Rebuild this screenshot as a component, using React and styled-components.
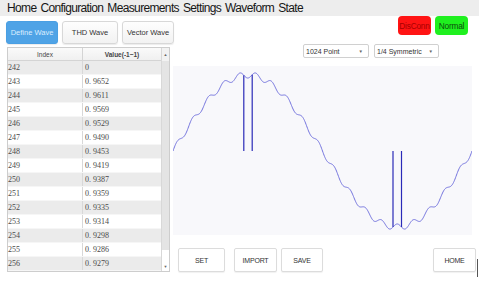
import React from "react";
import styled, { createGlobalStyle } from "styled-components";

const GlobalStyle = createGlobalStyle`
  html, body {
    margin: 0;
    padding: 0;
    background: #ffffff;
  }
  body {
    font-family: "Liberation Sans", Arial, sans-serif;
    overflow: hidden;
  }
`;

const Page = styled.div`
  width: 479px;
  height: 285px;
  overflow: hidden;
`;

const MenuBar = styled.nav`
  height: 16px;
  background: #ededed;
  display: flex;
  align-items: center;
  gap: 4px;
  padding-left: 7px;
  font-size: 12px;
  letter-spacing: -0.65px;
  color: #161616;
`;

const MenuItem = styled.span`
  line-height: 16px;
  white-space: nowrap;
`;

const Body = styled.div`
  display: grid;
  grid-template-columns: 173px 1fr;
`;

const LeftColumn = styled.div`
  display: flex;
  flex-direction: column;
`;

const Tabs = styled.div`
  display: flex;
  gap: 4px;
  margin-top: 5px;
  padding-left: 6px;
`;

const TabButton = styled.button`
  flex: none;
  width: ${(p) => p.$w}px;
  height: 23px;
  padding: 0;
  border-radius: 3px;
  box-sizing: border-box;
  font-family: "Liberation Sans", Arial, sans-serif;
  font-size: 7.5px;
  border: 1px solid ${(p) => (p.$active ? "#4a9fe3" : "#d8d8d8")};
  background: ${(p) => (p.$active ? "#4fa3e6" : "linear-gradient(#fefefe, #f2f2f2)")};
  color: ${(p) => (p.$active ? "#dbeeff" : "#333333")};
  box-shadow: 0 1px 1px rgba(0, 0, 0, 0.08);
`;

const TableBox = styled.div`
  margin: 3px 0 0 7px;
  width: 163px;
  height: 225px;
  box-sizing: border-box;
  border: 1px solid #cdcdcd;
  display: flex;
`;

const Grid = styled.div`
  flex: 1;
  display: flex;
  flex-direction: column;
`;

const HeaderRow = styled.div`
  display: grid;
  grid-template-columns: 75px 1fr;
  height: 13px;
  box-sizing: border-box;
  border-bottom: 1px solid #d4d4d4;
  background: linear-gradient(#fafafa, #f0f0f0);
  font-size: 6.5px;
  color: #444;
`;

const HeaderCell = styled.div`
  display: flex;
  align-items: center;
  justify-content: center;
  font-weight: ${(p) => (p.$bold ? 700 : 400)};
  border-right: ${(p) => (p.$divider ? "1px solid #d4d4d4" : "none")};
`;

const Row = styled.div`
  display: grid;
  grid-template-columns: 75px 1fr;
  height: 14px;
  box-sizing: border-box;
  border-bottom: 1px solid #f6f6f6;
  background: ${(p) => (p.$shaded ? "#ebebeb" : "#ffffff")};
  font-family: "Liberation Serif", "DejaVu Serif", serif;
  font-size: 8px;
  color: #4a4a4a;
`;

const Cell = styled.div`
  display: flex;
  align-items: center;
  padding-left: ${(p) => p.$pad}px;
  border-right: ${(p) => (p.$divider ? "1px solid #d8d8d8" : "none")};
`;

const ScrollBar = styled.div`
  width: 7px;
  border-left: 1px solid #d8d8d8;
  display: flex;
  flex-direction: column;
  background: #ffffff;
`;

const ScrollArrow = styled.div`
  height: ${(p) => p.$h}px;
  display: flex;
  align-items: center;
  justify-content: center;
  background: ${(p) => p.$bg};
  font-size: 4px;
  color: #666;
`;

const ScrollThumb = styled.div`
  height: 189px;
  background: #e4e4e4;
`;

const ScrollTrack = styled.div`
  flex: 1;
`;

const RightColumn = styled.div`
  display: flex;
  flex-direction: column;
`;

const StatusRow = styled.div`
  display: flex;
  justify-content: flex-end;
  gap: 4px;
  padding-right: 11px;
`;

const StatusBadge = styled.div`
  width: 33px;
  height: 19px;
  border-radius: 4px;
  display: flex;
  align-items: center;
  justify-content: center;
  overflow: hidden;
  font-size: 8.3px;
  letter-spacing: -0.2px;
  background: ${(p) => p.$bg};
  color: ${(p) => p.$fg};
`;

const SelectRow = styled.div`
  display: flex;
  gap: 5px;
  margin-top: 9px;
  padding-left: 130px;
`;

const Select = styled.div`
  width: ${(p) => p.$w}px;
  height: 14px;
  box-sizing: border-box;
  border: 1px solid #d0d0d0;
  border-radius: 2px;
  background: #ffffff;
  display: flex;
  align-items: center;
  justify-content: space-between;
  padding: 0 5px 0 2px;
  font-size: 7px;
  color: #333;
`;

const Caret = styled.span`
  font-size: 4.5px;
  color: #666;
`;

const PlotArea = styled.svg`
  display: block;
  margin-top: 8px;
  background: #f8f8fb;
`;

const ActionRow = styled.div`
  display: flex;
  align-items: flex-start;
  margin-top: 13px;
  padding-left: 5px;
`;

const ActionButton = styled.button`
  flex: none;
  width: ${(p) => p.$w}px;
  height: 24px;
  margin-right: ${(p) => p.$gap || 0}px;
  margin-left: ${(p) => (p.$push ? "auto" : "0")};
  padding: 0;
  box-sizing: border-box;
  border: 1px solid #dcdcdc;
  border-radius: 2px;
  background: #ffffff;
  box-shadow: 0 1px 1px rgba(0, 0, 0, 0.06);
  font-family: "Liberation Sans", Arial, sans-serif;
  font-size: 7px;
  letter-spacing: -0.2px;
  color: #333;
`;

const EdgeMark = styled.div`
  width: 1px;
  height: 18px;
  margin: 11px 1px 0 1px;
  background: #555;
`;

const PLOT_W = 299;
const PLOT_H = 169;
const MID = 85;
const AMP = 76;

const waveY = (x) => {
  const t = (x / PLOT_W) * 2 * Math.PI;
  return MID - AMP * (Math.sin(t) + 0.04 * Math.sin(19 * t));
};

const buildWave = () => {
  let d = "";
  for (let x = 0; x <= PLOT_W; x += 0.5) {
    d += (x === 0 ? "M" : "L") + x.toFixed(1) + " " + waveY(x).toFixed(2) + " ";
  }
  return d;
};

const spikes = [70.8, 79.2, 220, 228.5];

const rows = [
  ["242", "0"],
  ["243", "0. 9652"],
  ["244", "0. 9611"],
  ["245", "0. 9569"],
  ["246", "0. 9529"],
  ["247", "0. 9490"],
  ["248", "0. 9453"],
  ["249", "0. 9419"],
  ["250", "0. 9387"],
  ["251", "0. 9359"],
  ["252", "0. 9335"],
  ["253", "0. 9314"],
  ["254", "0. 9298"],
  ["255", "0. 9286"],
  ["256", "0. 9279"],
];

const menu = ["Home", "Configuration", "Measurements", "Settings", "Waveform", "State"];

const WavePlot = () => (
  <PlotArea width={PLOT_W} height={PLOT_H} viewBox={`0 0 ${PLOT_W} ${PLOT_H}`}>
    <path d={buildWave()} fill="none" stroke="#7474de" strokeWidth="1" />
    {spikes.map((x) => (
      <line key={x} x1={x} x2={x} y1={waveY(x)} y2={MID} stroke="#2a2ab8" strokeWidth="1.2" />
    ))}
  </PlotArea>
);

const App = () => {
  return (
    <Page>
      <GlobalStyle />
      <MenuBar>
        {menu.map((m) => (
          <MenuItem key={m}>{m}</MenuItem>
        ))}
      </MenuBar>
      <Body>
        <LeftColumn>
          <Tabs>
            <TabButton $w={52} $active>Define Wave</TabButton>
            <TabButton $w={56}>THD Wave</TabButton>
            <TabButton $w={52}>Vector Wave</TabButton>
          </Tabs>
          <TableBox>
            <Grid>
              <HeaderRow>
                <HeaderCell $divider>Index</HeaderCell>
                <HeaderCell $bold>Value(-1~1)</HeaderCell>
              </HeaderRow>
              {rows.map(([idx, val]) => (
                <Row key={idx} $shaded={Number(idx) % 2 === 0}>
                  <Cell $pad={0} $divider>{idx}</Cell>
                  <Cell $pad={2}>{val}</Cell>
                </Row>
              ))}
            </Grid>
            <ScrollBar>
              <ScrollArrow $h={13} $bg="#f2f2f2">▲</ScrollArrow>
              <ScrollThumb />
              <ScrollTrack />
              <ScrollArrow $h={9} $bg="#ffffff">▼</ScrollArrow>
            </ScrollBar>
          </TableBox>
        </LeftColumn>
        <RightColumn>
          <StatusRow>
            <StatusBadge $bg="#ff1414" $fg="#a80000">DisConn</StatusBadge>
            <StatusBadge $bg="#1ff01f" $fg="#0b4d0b">Normal</StatusBadge>
          </StatusRow>
          <SelectRow>
            <Select $w={66}>
              1024 Point <Caret>▼</Caret>
            </Select>
            <Select $w={65}>
              1/4 Symmetric <Caret>▼</Caret>
            </Select>
          </SelectRow>
          <WavePlot />
          <ActionRow>
            <ActionButton $w={47} $gap={9}>SET</ActionButton>
            <ActionButton $w={43} $gap={4}>IMPORT</ActionButton>
            <ActionButton $w={42}>SAVE</ActionButton>
            <ActionButton $w={43} $push>HOME</ActionButton>
            <EdgeMark />
          </ActionRow>
        </RightColumn>
      </Body>
    </Page>
  );
};

export default App;
